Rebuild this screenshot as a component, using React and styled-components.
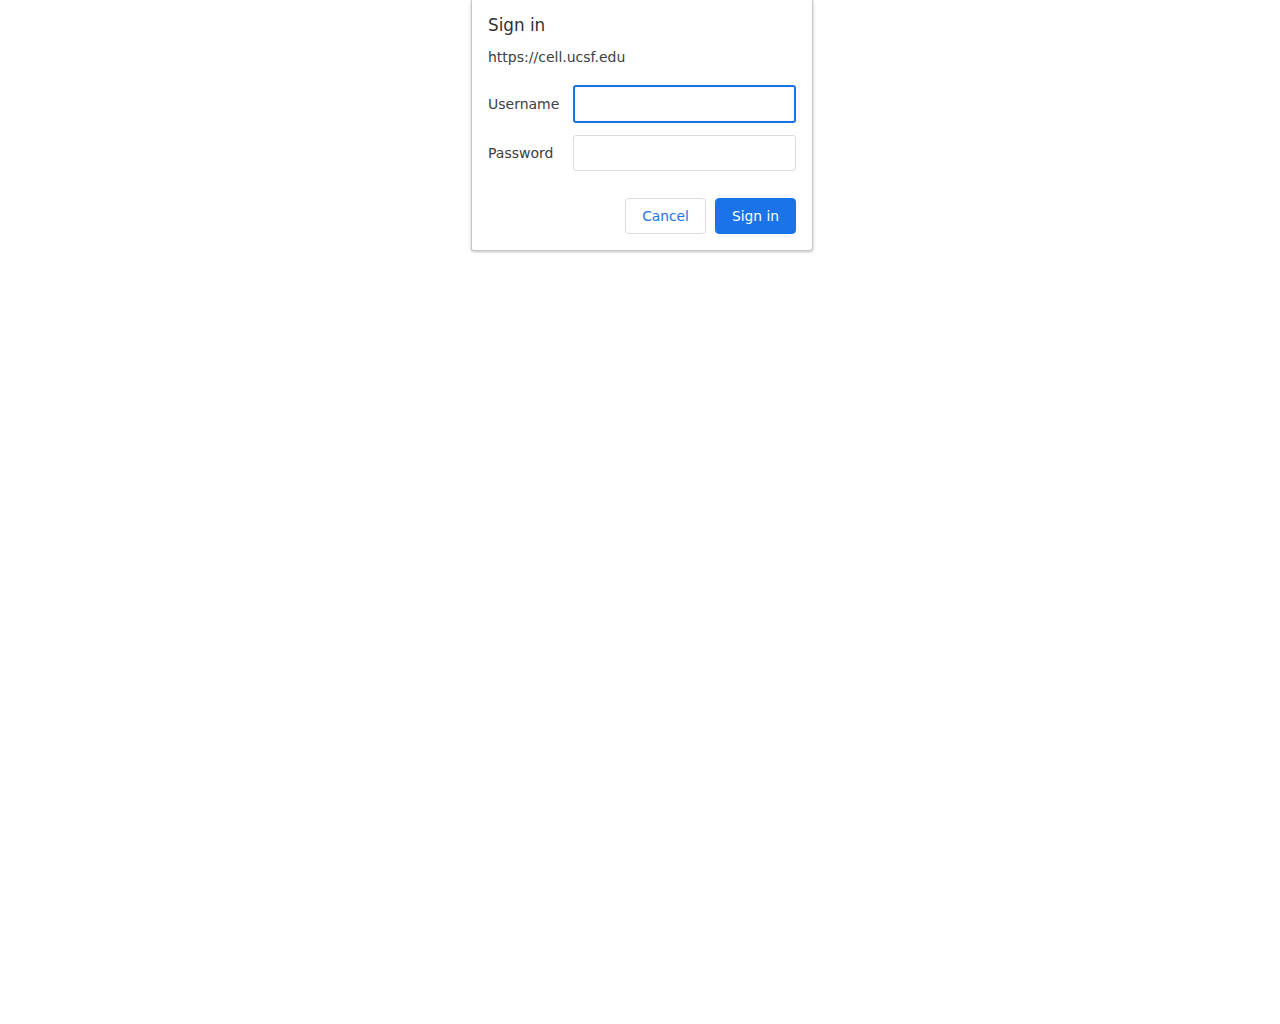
import React from "react";
import styled, { createGlobalStyle } from "styled-components";

const Global = createGlobalStyle`
  html, body { margin: 0; padding: 0; background: #ffffff; }
  body { font-family: "DejaVu Sans", "Noto Sans", sans-serif; }
`;

const Page = styled.div`
  display: flex;
  justify-content: center;
  padding-left: 4px;
  min-height: 1024px;
  align-items: flex-start;
`;

const Dialog = styled.div`
  width: 342px;
  box-sizing: border-box;
  background: #ffffff;
  border: 1px solid #c8c8c8;
  border-top: none;
  border-radius: 0 0 3px 3px;
  box-shadow: 0 1px 3px rgba(0, 0, 0, 0.25);
  padding: 15px 16px 16px 16px;
  display: flex;
  flex-direction: column;
`;

const Title = styled.div`
  font-size: 16.8px;
  line-height: 20px;
  color: #303134;
`;

const Origin = styled.div`
  margin-top: 13px;
  font-size: 14px;
  line-height: 18px;
  color: #3c4043;
`;

const Form = styled.div`
  margin-top: 19px;
  display: flex;
  flex-direction: column;
  gap: 12px;
`;

const Row = styled.label`
  display: flex;
  align-items: center;
`;

const Label = styled.span`
  width: 85px;
  flex: none;
  font-size: 14px;
  color: #3c4043;
`;

const Input = styled.input`
  width: 223px;
  height: ${(p) => (p.$focused ? "38px" : "36px")};
  box-sizing: border-box;
  border: ${(p) => (p.$focused ? "2px solid #1a73e8" : "1px solid #dadce0")};
  border-radius: 3px;
  outline: none;
  background: #ffffff;
  font-family: inherit;
  font-size: 14px;
  padding: 0 8px;
`;

const Actions = styled.div`
  margin-top: 27px;
  display: flex;
  justify-content: flex-end;
  gap: 9px;
`;

const Button = styled.button`
  height: 36px;
  box-sizing: border-box;
  padding: 0 16px;
  border-radius: 4px;
  font-family: inherit;
  font-size: 13.8px;
  cursor: pointer;
  border: 1px solid ${(p) => (p.$primary ? "#1a73e8" : "#dadce0")};
  background: ${(p) => (p.$primary ? "#1a73e8" : "#ffffff")};
  color: ${(p) => (p.$primary ? "#ffffff" : "#1a73e8")};
`;

export default function App() {
  return (
    <>
      <Global />
      <Page>
        <Dialog>
          <Title>Sign in</Title>
          <Origin>https://cell.ucsf.edu</Origin>
          <Form>
            <Row>
              <Label>Username</Label>
              <Input type="text" $focused />
            </Row>
            <Row>
              <Label>Password</Label>
              <Input type="password" />
            </Row>
          </Form>
          <Actions>
            <Button>Cancel</Button>
            <Button $primary>Sign in</Button>
          </Actions>
        </Dialog>
      </Page>
    </>
  );
}
